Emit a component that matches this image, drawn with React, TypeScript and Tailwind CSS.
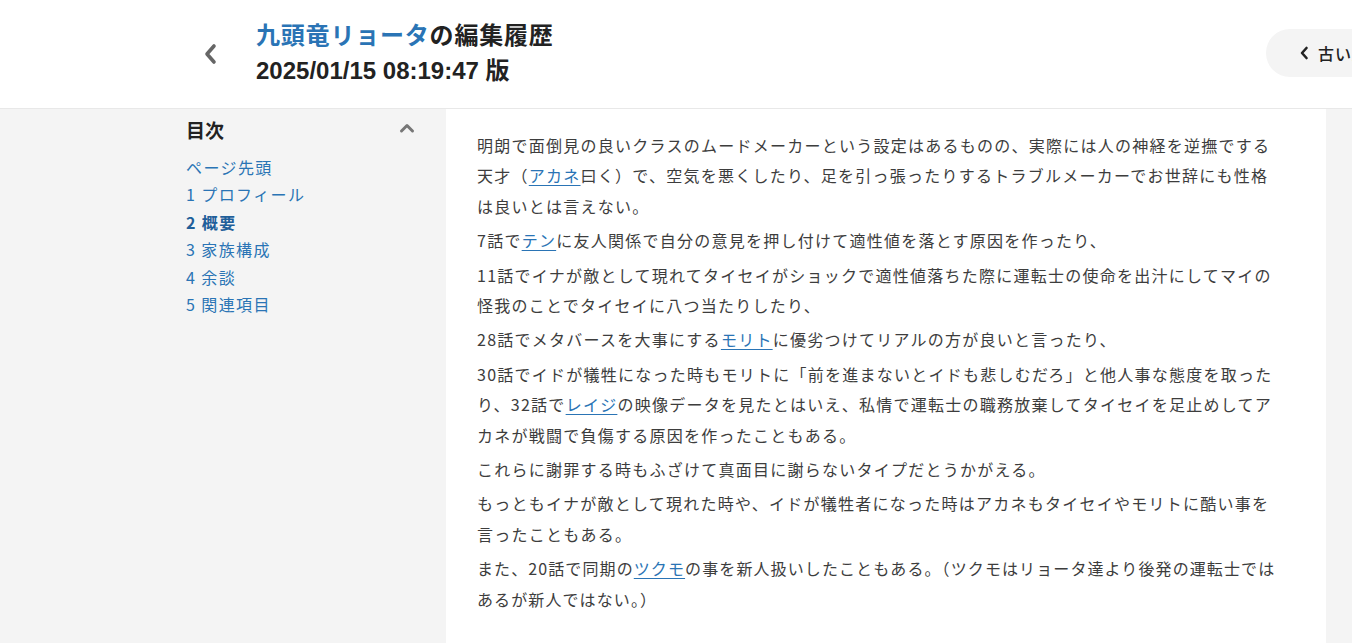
import React from "react";

const FONT = { fontFamily: '"Noto Sans CJK JP", "Noto Sans", sans-serif' };

const toc = [
    { label: "ページ先頭", active: false },
    { label: "1 プロフィール", active: false },
    { label: "2 概要", active: true },
    { label: "3 家族構成", active: false },
    { label: "4 余談", active: false },
    { label: "5 関連項目", active: false },
];

const L: React.FC<{ children: React.ReactNode }> = ({ children }) => (
    <a href="#" className="text-[#2a74b5] underline underline-offset-[3px]">
        {children}
    </a>
);

const App: React.FC = () => {
    return (
        <div className="h-[643px] w-[1352px] overflow-hidden bg-[#f4f4f4]" style={FONT}>
            {/* Header */}
            <header className="h-[109px] bg-white border-b border-[#e8e8e8] flex items-center">
                <div className="w-[256px] flex justify-end pr-[39px]">
                    <button className="text-[#666]">
                        <svg width="14" height="22" viewBox="0 0 14 22">
                            <path d="M11 3 L4 11 L11 19" fill="none" stroke="currentColor" strokeWidth="3.6" strokeLinecap="round" strokeLinejoin="round" />
                        </svg>
                    </button>
                </div>
                <div
                    className="flex-1 font-bold text-[24px] leading-[35px] text-[#222] -mt-[2px]"
                    style={{ fontFamily: '"Liberation Sans", "Noto Sans CJK JP", sans-serif' }}
                >
                    <div className="tracking-[0.8px]">
                        <a href="#" className="text-[#2a74b5]">九頭竜リョータ</a>の編集履歴
                    </div>
                    <div>2025/01/15 08:19:47 版</div>
                </div>
                <div className="shrink-0 -mr-[40px] w-[126px] h-[48px] rounded-full bg-[#f4f4f4] flex items-center pl-[33px] gap-[9px] text-[#222] text-[16px] -mt-[3px]">
                    <svg width="10" height="14" viewBox="0 0 10 14">
                        <path d="M7.5 2 L3 7 L7.5 12" fill="none" stroke="currentColor" strokeWidth="2.6" strokeLinecap="round" strokeLinejoin="round" />
                    </svg>
                    <span className="whitespace-nowrap font-medium tracking-[1px]">古い版</span>
                </div>
            </header>

            {/* Body */}
            <div className="flex">
                {/* TOC sidebar */}
                <aside className="w-[446px] shrink-0 pl-[186px] pr-[31px]">
                    <div className="flex items-center justify-between h-[42px]">
                        <span className="text-[19px] font-bold text-[#222]">目次</span>
                        <svg width="16" height="12" viewBox="0 0 16 12" className="text-[#777] -mt-[4px]">
                            <path d="M2.5 9 L8 3.5 L13.5 9" fill="none" stroke="currentColor" strokeWidth="3" strokeLinecap="round" strokeLinejoin="round" />
                        </svg>
                    </div>
                    <ul className="mt-[3px] text-[16px] leading-[27.4px] tracking-[1.4px]">
                        {toc.map((t) => (
                            <li key={t.label}>
                                <a
                                    href="#"
                                    className={t.active ? "font-bold text-[#1f5f9a]" : "text-[#2a74b5]"}
                                >
                                    {t.label}
                                </a>
                            </li>
                        ))}
                    </ul>
                </aside>

                {/* Article */}
                <main className="w-[880px] shrink-0 bg-white h-[534px] pl-[31px] pr-[44px] pt-[21px] text-[16px] leading-[30.4px] tracking-[1.25px] text-[#3d3d3d]">
                    <p className="mb-[4px]">
                        明朗で面倒見の良いクラスのムードメーカーという設定はあるものの、実際には人の神経を逆撫でする天才（<L>アカネ</L>曰く）で、空気を悪くしたり、足を引っ張ったりするトラブルメーカーでお世辞にも性格は良いとは言えない。
                    </p>
                    <p className="mb-[4px]">
                        7話で<L>テン</L>に友人関係で自分の意見を押し付けて適性値を落とす原因を作ったり、
                    </p>
                    <p className="mb-[4px]">
                        11話でイナが敵として現れてタイセイがショックで適性値落ちた際に運転士の使命を出汁にしてマイの怪我のことでタイセイに八つ当たりしたり、
                    </p>
                    <p className="mb-[4px]">
                        28話でメタバースを大事にする<L>モリト</L>に優劣つけてリアルの方が良いと言ったり、
                    </p>
                    <p className="mb-[4px]">
                        30話でイドが犠牲になった時もモリトに「前を進まないとイドも悲しむだろ」と他人事な態度を取ったり、32話で<L>レイジ</L>の映像データを見たとはいえ、私情で運転士の職務放棄してタイセイを足止めしてアカネが戦闘で負傷する原因を作ったこともある。
                    </p>
                    <p className="mb-[4px]">これらに謝罪する時もふざけて真面目に謝らないタイプだとうかがえる。</p>
                    <p className="mb-[4px]">
                        もっともイナが敵として現れた時や、イドが犠牲者になった時はアカネもタイセイやモリトに酷い事を言ったこともある。
                    </p>
                    <p className="mb-[4px] tracking-[1.1px]">
                        また、20話で同期の<L>ツクモ</L>の事を新人扱いしたこともある。（ツクモはリョータ達より後発の運転士ではあるが新人ではない。）
                    </p>
                </main>
            </div>
        </div>
    );
};

export default App;
